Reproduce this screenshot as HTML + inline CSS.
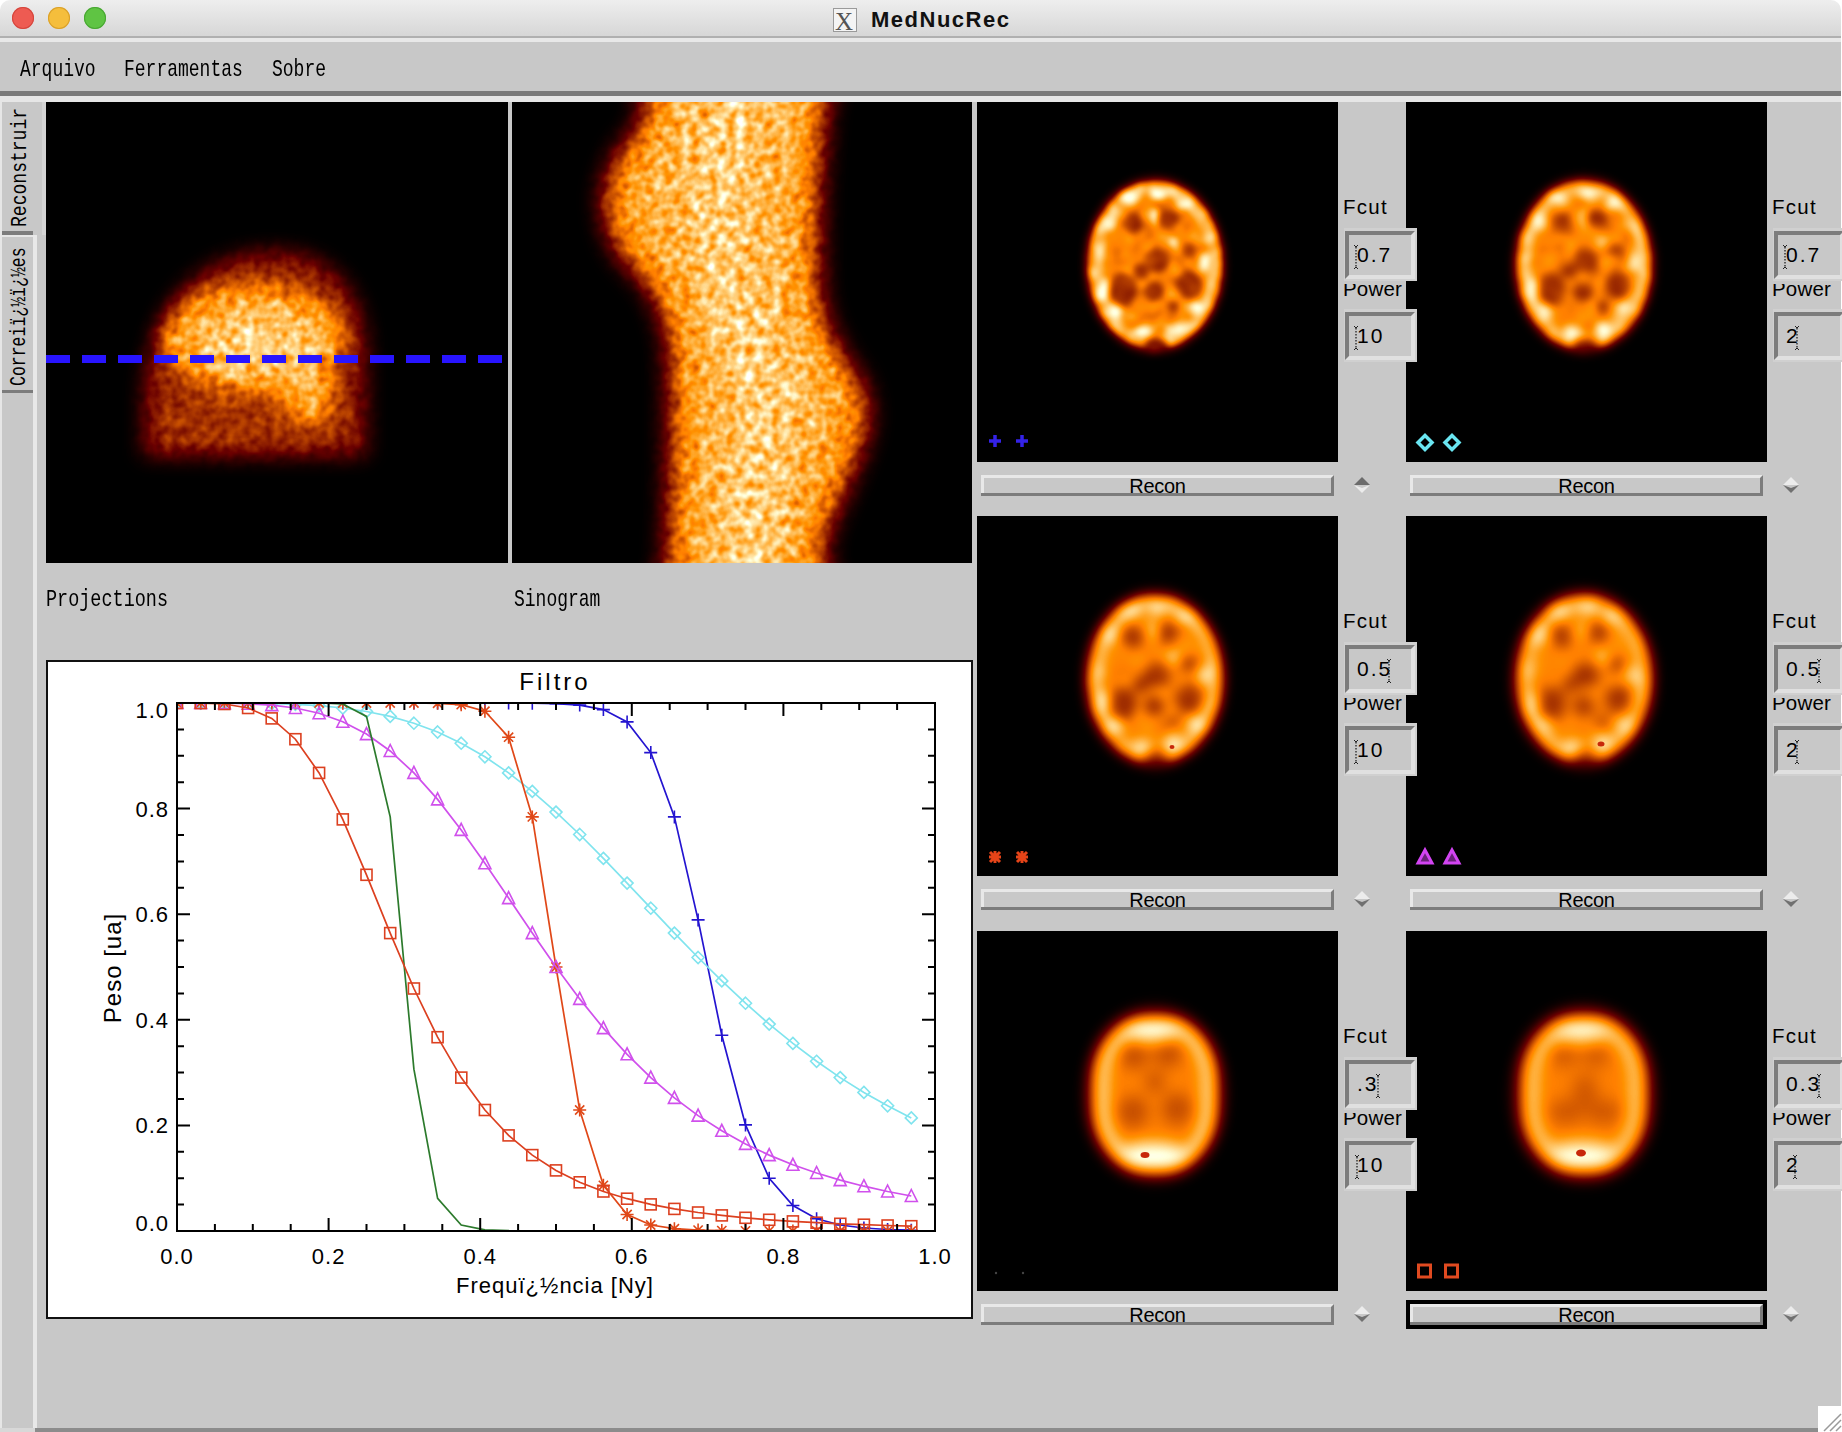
<!DOCTYPE html><html><head><meta charset="utf-8"><style>
*{margin:0;padding:0;box-sizing:border-box}
html,body{width:1842px;height:1432px;overflow:hidden;background:#fff}
.abs{position:absolute}
.mono{font-family:"Liberation Mono",monospace;font-size:24px;transform:scaleX(0.75);transform-origin:0 0;white-space:nowrap;color:#000;line-height:1}
.sans{font-family:"Liberation Sans",sans-serif;white-space:nowrap;color:#000;line-height:1}
.ct{font-family:"Liberation Sans",sans-serif;font-size:22px;fill:#000;letter-spacing:1px}
.cy{font-family:"Liberation Sans",sans-serif;font-size:24px;fill:#000;letter-spacing:1px}
.ctt{font-family:"Liberation Sans",sans-serif;font-size:24px;fill:#000;letter-spacing:3px}
</style></head><body><div class="abs" style="left:0px;top:20px;width:1841px;height:1412px;background:#c8c8c8;"></div><div class="abs" style="left:0px;top:0px;width:1841px;height:37px;background:linear-gradient(#eeeeee,#d6d6d6);border-top-left-radius:10px;border-top-right-radius:10px"></div><div class="abs" style="left:0px;top:36px;width:1841px;height:2px;background:#b0b0b0;"></div><div class="abs" style="left:0px;top:38px;width:1841px;height:4px;background:#e8e8e8;"></div><div class="abs" style="left:11.5px;top:7px;width:22px;height:22px;border-radius:50%;background:#ee5b52;box-shadow:inset 0 0 0 1px #d4463d"></div><div class="abs" style="left:47.5px;top:7px;width:22px;height:22px;border-radius:50%;background:#f5be3c;box-shadow:inset 0 0 0 1px #d9a02a"></div><div class="abs" style="left:83.5px;top:7px;width:22px;height:22px;border-radius:50%;background:#5fc443;box-shadow:inset 0 0 0 1px #48a733"></div><div class="abs" style="left:833px;top:8px;width:24px;height:24px;border:1px solid #9a9a9a;background:#f4f4f4"></div><div class="abs sans" style="left:835px;top:9px;font-family:'Liberation Serif',serif;font-size:25px;color:#555">X</div><div class="abs sans" style="left:871px;top:9px;font-size:22px;font-weight:bold;letter-spacing:1.5px;color:#111">MedNucRec</div><div class="abs" style="left:0px;top:91px;width:1841px;height:5px;background:#7a7a7a;"></div><div class="abs" style="left:0px;top:96px;width:1841px;height:6px;background:#e6e6e6;"></div><div class="abs mono" style="left:20px;top:58px">Arquivo</div><div class="abs mono" style="left:124px;top:58px">Ferramentas</div><div class="abs mono" style="left:272px;top:58px">Sobre</div><svg class="abs" style="left:0;top:0" width="1842" height="1432" viewBox="0 0 1842 1432"><defs><filter id="b2" x="0" y="0" width="1" height="1" color-interpolation-filters="sRGB"><feTurbulence type="fractalNoise" baseFrequency="0.09" numOctaves="2" seed="11" result="t"/><feColorMatrix in="t" type="matrix" values="1 0 0 0 0 1 0 0 0 0 1 0 0 0 0 0 0 0 0 1" result="n"/><feComposite in="SourceGraphic" in2="n" operator="arithmetic" k1="0.7" k2="0.65" k3="0" k4="0" result="m"/><feGaussianBlur in="m" stdDeviation="3.4"/><feComponentTransfer><feFuncR type="linear" slope="1.667" intercept="0"/><feFuncG type="linear" slope="1.4286" intercept="-0.357"/><feFuncB type="linear" slope="2.857" intercept="-1.857"/></feComponentTransfer></filter><filter id="b3" x="0" y="0" width="1" height="1" color-interpolation-filters="sRGB"><feTurbulence type="fractalNoise" baseFrequency="0.09" numOctaves="2" seed="12" result="t"/><feColorMatrix in="t" type="matrix" values="1 0 0 0 0 1 0 0 0 0 1 0 0 0 0 0 0 0 0 1" result="n"/><feComposite in="SourceGraphic" in2="n" operator="arithmetic" k1="0.6" k2="0.7" k3="0" k4="0" result="m"/><feGaussianBlur in="m" stdDeviation="4.0"/><feComponentTransfer><feFuncR type="linear" slope="1.667" intercept="0"/><feFuncG type="linear" slope="1.4286" intercept="-0.357"/><feFuncB type="linear" slope="2.857" intercept="-1.857"/></feComponentTransfer></filter><filter id="b5" x="0" y="0" width="1" height="1" color-interpolation-filters="sRGB"><feTurbulence type="fractalNoise" baseFrequency="0.09" numOctaves="2" seed="13" result="t"/><feColorMatrix in="t" type="matrix" values="1 0 0 0 0 1 0 0 0 0 1 0 0 0 0 0 0 0 0 1" result="n"/><feComposite in="SourceGraphic" in2="n" operator="arithmetic" k1="0.45" k2="0.775" k3="0" k4="0" result="m"/><feGaussianBlur in="m" stdDeviation="5.6"/><feComponentTransfer><feFuncR type="linear" slope="1.667" intercept="0"/><feFuncG type="linear" slope="1.4286" intercept="-0.357"/><feFuncB type="linear" slope="2.857" intercept="-1.857"/></feComponentTransfer></filter><filter id="b6" x="0" y="0" width="1" height="1" color-interpolation-filters="sRGB"><feTurbulence type="fractalNoise" baseFrequency="0.09" numOctaves="2" seed="14" result="t"/><feColorMatrix in="t" type="matrix" values="1 0 0 0 0 1 0 0 0 0 1 0 0 0 0 0 0 0 0 1" result="n"/><feComposite in="SourceGraphic" in2="n" operator="arithmetic" k1="0.4" k2="0.8" k3="0" k4="0" result="m"/><feGaussianBlur in="m" stdDeviation="6.4"/><feComponentTransfer><feFuncR type="linear" slope="1.667" intercept="0"/><feFuncG type="linear" slope="1.4286" intercept="-0.357"/><feFuncB type="linear" slope="2.857" intercept="-1.857"/></feComponentTransfer></filter><filter id="b9" x="0" y="0" width="1" height="1" color-interpolation-filters="sRGB"><feGaussianBlur stdDeviation="8.0"/><feComponentTransfer><feFuncR type="linear" slope="1.667" intercept="0"/><feFuncG type="linear" slope="1.4286" intercept="-0.357"/><feFuncB type="linear" slope="2.857" intercept="-1.857"/></feComponentTransfer></filter><filter id="b10" x="0" y="0" width="1" height="1" color-interpolation-filters="sRGB"><feGaussianBlur stdDeviation="8.6"/><feComponentTransfer><feFuncR type="linear" slope="1.667" intercept="0"/><feFuncG type="linear" slope="1.4286" intercept="-0.357"/><feFuncB type="linear" slope="2.857" intercept="-1.857"/></feComponentTransfer></filter><filter id="np" x="0" y="0" width="1" height="1" color-interpolation-filters="sRGB"><feGaussianBlur in="SourceGraphic" stdDeviation="10" result="b"/><feTurbulence type="fractalNoise" baseFrequency="0.11" numOctaves="2" seed="4" result="t"/><feColorMatrix in="t" type="matrix" values="1 0 0 0 0 1 0 0 0 0 1 0 0 0 0 0 0 0 0 1" result="n0"/><feGaussianBlur in="n0" stdDeviation="1.2" result="n"/><feComposite in="b" in2="n" operator="arithmetic" k1="0.9" k2="0.55" k3="0" k4="0" result="m"/><feComponentTransfer in="m"><feFuncR type="linear" slope="1.667" intercept="0"/><feFuncG type="linear" slope="1.4286" intercept="-0.357"/><feFuncB type="linear" slope="2.857" intercept="-1.857"/></feComponentTransfer></filter><filter id="ns" x="0" y="0" width="1" height="1" color-interpolation-filters="sRGB"><feGaussianBlur in="SourceGraphic" stdDeviation="12" result="b"/><feTurbulence type="fractalNoise" baseFrequency="0.11" numOctaves="2" seed="9" result="t"/><feColorMatrix in="t" type="matrix" values="1 0 0 0 0 1 0 0 0 0 1 0 0 0 0 0 0 0 0 1" result="n0"/><feGaussianBlur in="n0" stdDeviation="1.2" result="n"/><feComposite in="b" in2="n" operator="arithmetic" k1="0.9" k2="0.55" k3="0" k4="0" result="m"/><feComponentTransfer in="m"><feFuncR type="linear" slope="1.667" intercept="0"/><feFuncG type="linear" slope="1.4286" intercept="-0.357"/><feFuncB type="linear" slope="2.857" intercept="-1.857"/></feComponentTransfer></filter><clipPath id="cp"><rect x="46" y="102" width="462" height="461"/></clipPath><clipPath id="cs"><rect x="512" y="102" width="460" height="461"/></clipPath><clipPath id="c00"><rect x="977" y="102" width="361" height="360"/></clipPath><clipPath id="c01"><rect x="1406" y="102" width="361" height="360"/></clipPath><clipPath id="c10"><rect x="977" y="516" width="361" height="360"/></clipPath><clipPath id="c11"><rect x="1406" y="516" width="361" height="360"/></clipPath><clipPath id="c20"><rect x="977" y="931" width="361" height="360"/></clipPath><clipPath id="c21"><rect x="1406" y="931" width="361" height="360"/></clipPath><radialGradient id="rgb"><stop offset="0" stop-color="rgb(110,110,110)"/><stop offset="0.8" stop-color="rgb(110,110,110)"/><stop offset="1" stop-color="#000"/></radialGradient><radialGradient id="rgs"><stop offset="0" stop-color="rgb(120,120,120)"/><stop offset="0.75" stop-color="rgb(120,120,120)"/><stop offset="1" stop-color="#000"/></radialGradient></defs><g clip-path="url(#cp)"><g filter="url(#np)"><rect x="6" y="62" width="542" height="541" fill="#000"/><path d="M144 456 L144 400 C144 330 182 254 270 251 C338 249 366 300 366 350 L366 456 Z" fill="rgb(87,87,87)"/><ellipse cx="250" cy="420" rx="100" ry="34" fill="rgb(99,99,99)"/><ellipse cx="253" cy="338" rx="92" ry="54" fill="rgb(178,178,178)"/><ellipse cx="262" cy="345" rx="62" ry="32" fill="rgb(209,209,209)"/><ellipse cx="308" cy="392" rx="26" ry="30" fill="rgb(189,189,189)"/></g></g><g clip-path="url(#cs)"><g filter="url(#ns)"><rect x="472" y="62" width="540" height="541" fill="#000"/><path d="M655.0 80.0 C624.8 83.7 650.2 93.3 647.0 102.0 C643.8 110.7 640.3 124.0 636.0 132.0 C631.7 140.0 625.0 144.0 621.0 150.0 C617.0 156.0 614.8 160.0 612.0 168.0 C609.2 176.0 604.3 187.0 604.0 198.0 C603.7 209.0 607.2 224.3 610.0 234.0 C612.8 243.7 614.8 247.3 621.0 256.0 C627.2 264.7 640.3 276.2 647.0 286.0 C653.7 295.8 657.3 304.0 661.0 315.0 C664.7 326.0 667.5 327.5 669.0 352.0 C670.5 376.5 670.3 427.2 670.0 462.0 C669.7 496.8 667.5 538.0 667.0 561.0 C666.5 584.0 641.0 593.5 667.0 600.0 C693.0 606.5 797.0 606.5 823.0 600.0 C849.0 593.5 822.5 571.8 823.0 561.0 C823.5 550.2 823.0 545.5 826.0 535.0 C829.0 524.5 836.0 510.2 841.0 498.0 C846.0 485.8 851.7 474.2 856.0 462.0 C860.3 449.8 865.8 437.3 867.0 425.0 C868.2 412.7 867.3 400.2 863.0 388.0 C858.7 375.8 848.0 366.7 841.0 352.0 C834.0 337.3 824.7 325.3 821.0 300.0 C817.3 274.7 818.2 233.0 819.0 200.0 C819.8 167.0 824.5 122.0 826.0 102.0 C827.5 82.0 856.5 83.7 828.0 80.0 C799.5 76.3 685.2 76.3 655.0 80.0Z" fill="rgb(173,173,173)"/><path d="M672.0 80.0 C651.2 83.7 680.3 82.0 675.0 102.0 C669.7 122.0 638.3 167.0 640.0 200.0 C641.7 233.0 675.0 266.7 685.0 300.0 C695.0 333.3 697.5 356.2 700.0 400.0 C702.5 443.8 700.0 531.3 700.0 563.0 C700.0 594.7 684.2 585.5 700.0 590.0 C715.8 594.5 779.2 594.5 795.0 590.0 C810.8 585.5 793.3 578.0 795.0 563.0 C796.7 548.0 799.2 527.2 805.0 500.0 C810.8 472.8 830.8 433.3 830.0 400.0 C829.2 366.7 805.8 333.3 800.0 300.0 C794.2 266.7 795.0 233.0 795.0 200.0 C795.0 167.0 799.2 122.0 800.0 102.0 C800.8 82.0 821.3 83.7 800.0 80.0 C778.7 76.3 692.8 76.3 672.0 80.0Z" fill="rgb(191,191,191)"/><path d="M707.0 80.0 C697.7 83.7 709.5 82.0 707.0 102.0 C704.5 122.0 692.0 167.0 692.0 200.0 C692.0 233.0 699.5 266.7 707.0 300.0 C714.5 333.3 734.2 366.7 737.0 400.0 C739.8 433.3 727.3 468.3 724.0 500.0 C720.7 531.7 708.8 575.0 717.0 590.0 C725.2 605.0 762.5 605.0 773.0 590.0 C783.5 575.0 776.7 531.7 780.0 500.0 C783.3 468.3 795.8 433.3 793.0 400.0 C790.2 366.7 770.5 333.3 763.0 300.0 C755.5 266.7 748.0 233.0 748.0 200.0 C748.0 167.0 760.5 122.0 763.0 102.0 C765.5 82.0 772.3 83.7 763.0 80.0 C753.7 76.3 716.3 76.3 707.0 80.0Z" fill="rgb(209,209,209)"/></g></g><g clip-path="url(#c00)"><g filter="url(#b2)"><rect x="937" y="62" width="441" height="440" fill="#000"/><g transform="translate(1155,265)"><ellipse cx="0" cy="0" rx="75" ry="93" fill="url(#rgb)"/><ellipse cx="0" cy="0" rx="60" ry="77" fill="rgb(158,158,158)" stroke="rgb(204,204,204)" stroke-width="13"/><ellipse cx="-26" cy="-68" rx="10" ry="7" fill="rgb(247,247,247)"/><ellipse cx="3" cy="-71" rx="8" ry="6" fill="rgb(247,247,247)"/><ellipse cx="29" cy="-62" rx="8" ry="6" fill="rgb(247,247,247)"/><ellipse cx="-45" cy="-44" rx="7" ry="9" fill="rgb(247,247,247)"/><ellipse cx="-52" cy="25" rx="6" ry="12" fill="rgb(247,247,247)"/><ellipse cx="-40" cy="45" rx="7" ry="8" fill="rgb(247,247,247)"/><ellipse cx="-12" cy="67" rx="9" ry="6" fill="rgb(247,247,247)"/><ellipse cx="19" cy="64" rx="9" ry="7" fill="rgb(247,247,247)"/><ellipse cx="41" cy="45" rx="7" ry="8" fill="rgb(247,247,247)"/><ellipse cx="49" cy="-3" rx="5" ry="9" fill="rgb(247,247,247)"/><ellipse cx="-56" cy="-8" rx="4" ry="7" fill="rgb(247,247,247)"/><ellipse cx="18" cy="-23" rx="5" ry="5" fill="rgb(247,247,247)"/><ellipse cx="0" cy="-48" rx="4" ry="9" fill="rgb(247,247,247)"/><ellipse cx="-22" cy="-42" rx="10" ry="11" fill="rgb(97,97,97)"/><ellipse cx="13" cy="-46" rx="11" ry="10" fill="rgb(97,97,97)"/><ellipse cx="33" cy="-15" rx="7" ry="7" fill="rgb(97,97,97)"/><ellipse cx="2" cy="-4" rx="13" ry="12" fill="rgb(97,97,97)"/><ellipse cx="-32" cy="25" rx="14" ry="17" fill="rgb(97,97,97)"/><ellipse cx="34" cy="20" rx="13" ry="14" fill="rgb(97,97,97)"/><ellipse cx="-1" cy="27" rx="10" ry="10" fill="rgb(97,97,97)"/><ellipse cx="-14" cy="6" rx="8" ry="8" fill="rgb(97,97,97)"/><ellipse cx="18" cy="42" rx="6" ry="6" fill="rgb(97,97,97)"/><ellipse cx="1" cy="80" rx="12" ry="7" fill="rgb(76,76,76)"/></g></g></g><g clip-path="url(#c01)"><g filter="url(#b3)"><rect x="1366" y="62" width="441" height="440" fill="#000"/><g transform="translate(1584,265)"><ellipse cx="0" cy="0" rx="75" ry="93" fill="url(#rgb)"/><ellipse cx="0" cy="0" rx="60" ry="77" fill="rgb(158,158,158)" stroke="rgb(204,204,204)" stroke-width="13"/><ellipse cx="-26" cy="-68" rx="10" ry="7" fill="rgb(247,247,247)"/><ellipse cx="3" cy="-71" rx="8" ry="6" fill="rgb(247,247,247)"/><ellipse cx="29" cy="-62" rx="8" ry="6" fill="rgb(247,247,247)"/><ellipse cx="-45" cy="-44" rx="7" ry="9" fill="rgb(247,247,247)"/><ellipse cx="-52" cy="25" rx="6" ry="12" fill="rgb(247,247,247)"/><ellipse cx="-40" cy="45" rx="7" ry="8" fill="rgb(247,247,247)"/><ellipse cx="-12" cy="67" rx="9" ry="6" fill="rgb(247,247,247)"/><ellipse cx="19" cy="64" rx="9" ry="7" fill="rgb(247,247,247)"/><ellipse cx="41" cy="45" rx="7" ry="8" fill="rgb(247,247,247)"/><ellipse cx="49" cy="-3" rx="5" ry="9" fill="rgb(247,247,247)"/><ellipse cx="-56" cy="-8" rx="4" ry="7" fill="rgb(247,247,247)"/><ellipse cx="18" cy="-23" rx="5" ry="5" fill="rgb(247,247,247)"/><ellipse cx="0" cy="-48" rx="4" ry="9" fill="rgb(247,247,247)"/><ellipse cx="-22" cy="-42" rx="10" ry="11" fill="rgb(97,97,97)"/><ellipse cx="13" cy="-46" rx="11" ry="10" fill="rgb(97,97,97)"/><ellipse cx="33" cy="-15" rx="7" ry="7" fill="rgb(97,97,97)"/><ellipse cx="2" cy="-4" rx="13" ry="12" fill="rgb(97,97,97)"/><ellipse cx="-32" cy="25" rx="14" ry="17" fill="rgb(97,97,97)"/><ellipse cx="34" cy="20" rx="13" ry="14" fill="rgb(97,97,97)"/><ellipse cx="-1" cy="27" rx="10" ry="10" fill="rgb(97,97,97)"/><ellipse cx="-14" cy="6" rx="8" ry="8" fill="rgb(97,97,97)"/><ellipse cx="18" cy="42" rx="6" ry="6" fill="rgb(97,97,97)"/><ellipse cx="1" cy="80" rx="12" ry="7" fill="rgb(76,76,76)"/></g></g></g><g clip-path="url(#c10)"><g filter="url(#b5)"><rect x="937" y="476" width="441" height="440" fill="#000"/><g transform="translate(1155,679)"><ellipse cx="0" cy="0" rx="75" ry="93" fill="url(#rgb)"/><ellipse cx="0" cy="0" rx="60" ry="77" fill="rgb(158,158,158)" stroke="rgb(204,204,204)" stroke-width="13"/><ellipse cx="-26" cy="-68" rx="10" ry="7" fill="rgb(247,247,247)"/><ellipse cx="3" cy="-71" rx="8" ry="6" fill="rgb(247,247,247)"/><ellipse cx="29" cy="-62" rx="8" ry="6" fill="rgb(247,247,247)"/><ellipse cx="-45" cy="-44" rx="7" ry="9" fill="rgb(247,247,247)"/><ellipse cx="-52" cy="25" rx="6" ry="12" fill="rgb(247,247,247)"/><ellipse cx="-40" cy="45" rx="7" ry="8" fill="rgb(247,247,247)"/><ellipse cx="-12" cy="67" rx="9" ry="6" fill="rgb(247,247,247)"/><ellipse cx="19" cy="64" rx="9" ry="7" fill="rgb(247,247,247)"/><ellipse cx="41" cy="45" rx="7" ry="8" fill="rgb(247,247,247)"/><ellipse cx="49" cy="-3" rx="5" ry="9" fill="rgb(247,247,247)"/><ellipse cx="-56" cy="-8" rx="4" ry="7" fill="rgb(247,247,247)"/><ellipse cx="18" cy="-23" rx="5" ry="5" fill="rgb(247,247,247)"/><ellipse cx="0" cy="-48" rx="4" ry="9" fill="rgb(247,247,247)"/><ellipse cx="-22" cy="-42" rx="10" ry="11" fill="rgb(97,97,97)"/><ellipse cx="13" cy="-46" rx="11" ry="10" fill="rgb(97,97,97)"/><ellipse cx="33" cy="-15" rx="7" ry="7" fill="rgb(97,97,97)"/><ellipse cx="2" cy="-4" rx="13" ry="12" fill="rgb(97,97,97)"/><ellipse cx="-32" cy="25" rx="14" ry="17" fill="rgb(97,97,97)"/><ellipse cx="34" cy="20" rx="13" ry="14" fill="rgb(97,97,97)"/><ellipse cx="-1" cy="27" rx="10" ry="10" fill="rgb(97,97,97)"/><ellipse cx="-14" cy="6" rx="8" ry="8" fill="rgb(97,97,97)"/><ellipse cx="18" cy="42" rx="6" ry="6" fill="rgb(97,97,97)"/><ellipse cx="1" cy="80" rx="12" ry="7" fill="rgb(76,76,76)"/></g></g></g><g clip-path="url(#c11)"><g filter="url(#b6)"><rect x="1366" y="476" width="441" height="440" fill="#000"/><g transform="translate(1584,679)"><ellipse cx="0" cy="0" rx="75" ry="93" fill="url(#rgb)"/><ellipse cx="0" cy="0" rx="60" ry="77" fill="rgb(158,158,158)" stroke="rgb(204,204,204)" stroke-width="13"/><ellipse cx="-26" cy="-68" rx="10" ry="7" fill="rgb(247,247,247)"/><ellipse cx="3" cy="-71" rx="8" ry="6" fill="rgb(247,247,247)"/><ellipse cx="29" cy="-62" rx="8" ry="6" fill="rgb(247,247,247)"/><ellipse cx="-45" cy="-44" rx="7" ry="9" fill="rgb(247,247,247)"/><ellipse cx="-52" cy="25" rx="6" ry="12" fill="rgb(247,247,247)"/><ellipse cx="-40" cy="45" rx="7" ry="8" fill="rgb(247,247,247)"/><ellipse cx="-12" cy="67" rx="9" ry="6" fill="rgb(247,247,247)"/><ellipse cx="19" cy="64" rx="9" ry="7" fill="rgb(247,247,247)"/><ellipse cx="41" cy="45" rx="7" ry="8" fill="rgb(247,247,247)"/><ellipse cx="49" cy="-3" rx="5" ry="9" fill="rgb(247,247,247)"/><ellipse cx="-56" cy="-8" rx="4" ry="7" fill="rgb(247,247,247)"/><ellipse cx="18" cy="-23" rx="5" ry="5" fill="rgb(247,247,247)"/><ellipse cx="0" cy="-48" rx="4" ry="9" fill="rgb(247,247,247)"/><ellipse cx="-22" cy="-42" rx="10" ry="11" fill="rgb(97,97,97)"/><ellipse cx="13" cy="-46" rx="11" ry="10" fill="rgb(97,97,97)"/><ellipse cx="33" cy="-15" rx="7" ry="7" fill="rgb(97,97,97)"/><ellipse cx="2" cy="-4" rx="13" ry="12" fill="rgb(97,97,97)"/><ellipse cx="-32" cy="25" rx="14" ry="17" fill="rgb(97,97,97)"/><ellipse cx="34" cy="20" rx="13" ry="14" fill="rgb(97,97,97)"/><ellipse cx="-1" cy="27" rx="10" ry="10" fill="rgb(97,97,97)"/><ellipse cx="-14" cy="6" rx="8" ry="8" fill="rgb(97,97,97)"/><ellipse cx="18" cy="42" rx="6" ry="6" fill="rgb(97,97,97)"/><ellipse cx="1" cy="80" rx="12" ry="7" fill="rgb(76,76,76)"/></g></g></g><g clip-path="url(#c20)"><g filter="url(#b9)"><rect x="937" y="891" width="441" height="440" fill="#000"/><g transform="translate(1155,1094)"><ellipse cx="0" cy="0" rx="72" ry="90" fill="url(#rgs)"/><rect x="-55" y="-71" width="110" height="143" rx="48" ry="58" fill="rgb(153,153,153)" stroke="rgb(242,242,242)" stroke-width="13"/><ellipse cx="-21" cy="-38" rx="14" ry="13" fill="rgb(117,117,117)"/><ellipse cx="13" cy="-40" rx="14" ry="13" fill="rgb(117,117,117)"/><ellipse cx="-22" cy="18" rx="15" ry="16" fill="rgb(117,117,117)"/><ellipse cx="22" cy="15" rx="15" ry="16" fill="rgb(117,117,117)"/><ellipse cx="0" cy="-12" rx="9" ry="11" fill="rgb(117,117,117)"/><ellipse cx="-4" cy="-62" rx="28" ry="8" fill="rgb(255,255,255)"/><ellipse cx="-2" cy="60" rx="34" ry="11" fill="rgb(255,255,255)"/></g></g></g><g clip-path="url(#c21)"><g filter="url(#b10)"><rect x="1366" y="891" width="441" height="440" fill="#000"/><g transform="translate(1584,1094)"><ellipse cx="0" cy="0" rx="72" ry="90" fill="url(#rgs)"/><rect x="-55" y="-71" width="110" height="143" rx="48" ry="58" fill="rgb(153,153,153)" stroke="rgb(242,242,242)" stroke-width="13"/><ellipse cx="-20" cy="-38" rx="13" ry="11" fill="rgb(122,122,122)"/><ellipse cx="12" cy="-38" rx="13" ry="11" fill="rgb(122,122,122)"/><ellipse cx="1" cy="-4" rx="12" ry="16" fill="rgb(122,122,122)"/><ellipse cx="-18" cy="18" rx="18" ry="12" fill="rgb(122,122,122)"/><ellipse cx="20" cy="18" rx="18" ry="12" fill="rgb(122,122,122)"/><ellipse cx="-4" cy="-62" rx="28" ry="8" fill="rgb(255,255,255)"/><ellipse cx="-2" cy="60" rx="34" ry="11" fill="rgb(255,255,255)"/></g></g></g><path d="M46 359h24M82 359h24M118 359h24M154 359h24M190 359h24M226 359h24M262 359h24M298 359h24M334 359h24M370 359h24M406 359h24M442 359h24M478 359h24" stroke="#2814ff" stroke-width="8"/><path d="M989 441h12M995 435v12" stroke="#3422e8" stroke-width="3.5"/><path d="M1016 441h12M1022 435v12" stroke="#3422e8" stroke-width="3.5"/><path d="M1425 435.5L1432 442.5L1425 449.5L1418 442.5Z" stroke="#6ae6f2" stroke-width="3.5" fill="none"/><path d="M1452 435.5L1459 442.5L1452 449.5L1445 442.5Z" stroke="#6ae6f2" stroke-width="3.5" fill="none"/><path d="M989 857h12M995 851v12M990 852l10 10M990 862l10 -10" stroke="#e64418" stroke-width="3"/><path d="M1016 857h12M1022 851v12M1017 852l10 10M1017 862l10 -10" stroke="#e64418" stroke-width="3"/><path d="M1425 850L1432 863L1418 863Z" stroke="#d244f2" stroke-width="3" fill="#d244f2" fill-opacity="0.5"/><path d="M1452 850L1459 863L1445 863Z" stroke="#d244f2" stroke-width="3" fill="#d244f2" fill-opacity="0.5"/><circle cx="996" cy="1273" r="1.2" fill="#444"/><circle cx="1023" cy="1273" r="1.2" fill="#444"/><rect x="1418.5" y="1265" width="12" height="12" stroke="#e04a20" stroke-width="3" fill="none"/><rect x="1445.5" y="1265" width="12" height="12" stroke="#e04a20" stroke-width="3" fill="none"/><ellipse cx="1172" cy="747" rx="2.5" ry="2" fill="#c8280a"/><ellipse cx="1601" cy="744" rx="3.5" ry="2.5" fill="#c8280a"/><ellipse cx="1145" cy="1155" rx="4.5" ry="3" fill="#c8280a"/><ellipse cx="1581" cy="1153" rx="5" ry="3.5" fill="#c8280a"/></svg><div class="abs" style="left:0px;top:102px;width:2px;height:1326px;background:#e6e6e6;"></div><div class="abs" style="left:2px;top:102px;width:40px;height:129px;background:#c8c8c8;"></div><div class="abs" style="left:42px;top:102px;width:4px;height:133px;background:#d4d4d4;"></div><div class="abs" style="left:2px;top:231px;width:31px;height:4px;background:#7c7c7c;"></div><div class="abs" style="left:0px;top:235px;width:33px;height:2px;background:#e6e6e6;"></div><div class="abs" style="left:2px;top:237px;width:31px;height:153px;background:#c8c8c8;"></div><div class="abs" style="left:2px;top:390px;width:31px;height:3px;background:#7c7c7c;"></div><div class="abs" style="left:33px;top:235px;width:4px;height:1193px;background:#e8e8e8;"></div><div class="abs mono" style="left:10px;top:227px;transform:rotate(-90deg) scaleX(0.82);transform-origin:0 0;font-size:22px">Reconstruir</div><div class="abs mono" style="left:9px;top:386px;transform:rotate(-90deg) scaleX(0.75);transform-origin:0 0;font-size:22px">Correiï¿½ï¿½es</div><div class="abs" style="left:35px;top:1428px;width:1806px;height:4px;background:#8c8c8c;"></div><div class="abs" style="left:0px;top:1428px;width:35px;height:4px;background:#d8d8d8;"></div><div class="abs mono" style="left:46px;top:588px;transform:scaleX(0.77)">Projections</div><div class="abs mono" style="left:514px;top:588px">Sinogram</div><div class="abs sans" style="left:1343px;top:197px;font-size:20.5px;letter-spacing:1.3px">Fcut</div><div class="abs" style="left:1343px;top:284px;width:60px;height:20px;overflow:hidden"><div class="sans" style="position:absolute;left:0;top:-5px;font-size:20.5px;letter-spacing:0.2px">Power</div></div><div class="abs" style="left:1344px;top:228px;width:73px;height:53px;background:#d0d0d0;"></div><div class="abs" style="left:1345px;top:231px;width:70px;height:48px;background:#c8c8c8;border-style:solid;border-width:4px;border-color:#7c7c7c #e0e0e0 #e0e0e0 #7c7c7c"></div><div class="abs sans" style="left:1357px;top:244px;font-size:21px;letter-spacing:2px">0.7</div><div class="abs" style="left:1344px;top:309px;width:73px;height:53px;background:#d0d0d0;"></div><div class="abs" style="left:1345px;top:312px;width:70px;height:48px;background:#c8c8c8;border-style:solid;border-width:4px;border-color:#7c7c7c #e0e0e0 #e0e0e0 #7c7c7c"></div><div class="abs sans" style="left:1357px;top:325px;font-size:21px;letter-spacing:2px">10</div><svg class="abs" style="left:1353px;top:245px" width="6" height="24"><path d="M3 2v20" stroke="#222" stroke-width="1.3" stroke-dasharray="1.5 1.5"/><path d="M1 0l2 2l2 -2M1 24l2 -2l2 2" stroke="#222" stroke-width="1" fill="none"/></svg><svg class="abs" style="left:1353px;top:326px" width="6" height="24"><path d="M3 2v20" stroke="#222" stroke-width="1.3" stroke-dasharray="1.5 1.5"/><path d="M1 0l2 2l2 -2M1 24l2 -2l2 2" stroke="#222" stroke-width="1" fill="none"/></svg><div class="abs" style="left:981px;top:475px;width:353px;height:21px;background:#c8c8c8;border-top:3px solid #e8e8e8;border-left:3px solid #e8e8e8"></div><div class="abs sans" style="left:981px;width:353px;top:476px;text-align:center;font-size:20px;letter-spacing:-0.3px">Recon</div><div class="abs" style="left:981px;top:493px;width:353px;height:3px;background:#7c7c7c;"></div><div class="abs" style="left:1331px;top:475px;width:3px;height:21px;background:#7c7c7c;clip-path:polygon(100% 0,100% 100%,0 100%,0 3px)"></div><svg class="abs" style="left:1353px;top:476px" width="18" height="18"><path d="M1 9 L9 1 L17 9 Z" fill="#6c6c6c"/><path d="M1 9 L9 17 L17 9 L9 12 Z" fill="#ececec"/></svg><div class="abs sans" style="left:1772px;top:197px;font-size:20.5px;letter-spacing:1.3px">Fcut</div><div class="abs" style="left:1772px;top:284px;width:60px;height:20px;overflow:hidden"><div class="sans" style="position:absolute;left:0;top:-5px;font-size:20.5px;letter-spacing:0.2px">Power</div></div><div class="abs" style="left:1773px;top:228px;width:73px;height:53px;background:#d0d0d0;"></div><div class="abs" style="left:1774px;top:231px;width:70px;height:48px;background:#c8c8c8;border-style:solid;border-width:4px;border-color:#7c7c7c #e0e0e0 #e0e0e0 #7c7c7c"></div><div class="abs sans" style="left:1786px;top:244px;font-size:21px;letter-spacing:2px">0.7</div><div class="abs" style="left:1773px;top:309px;width:73px;height:53px;background:#d0d0d0;"></div><div class="abs" style="left:1774px;top:312px;width:70px;height:48px;background:#c8c8c8;border-style:solid;border-width:4px;border-color:#7c7c7c #e0e0e0 #e0e0e0 #7c7c7c"></div><div class="abs sans" style="left:1786px;top:325px;font-size:21px;letter-spacing:2px">2</div><svg class="abs" style="left:1782px;top:245px" width="6" height="24"><path d="M3 2v20" stroke="#222" stroke-width="1.3" stroke-dasharray="1.5 1.5"/><path d="M1 0l2 2l2 -2M1 24l2 -2l2 2" stroke="#222" stroke-width="1" fill="none"/></svg><svg class="abs" style="left:1794px;top:326px" width="6" height="24"><path d="M3 2v20" stroke="#222" stroke-width="1.3" stroke-dasharray="1.5 1.5"/><path d="M1 0l2 2l2 -2M1 24l2 -2l2 2" stroke="#222" stroke-width="1" fill="none"/></svg><div class="abs" style="left:1410px;top:475px;width:353px;height:21px;background:#c8c8c8;border-top:3px solid #e8e8e8;border-left:3px solid #e8e8e8"></div><div class="abs sans" style="left:1410px;width:353px;top:476px;text-align:center;font-size:20px;letter-spacing:-0.3px">Recon</div><div class="abs" style="left:1410px;top:493px;width:353px;height:3px;background:#7c7c7c;"></div><div class="abs" style="left:1760px;top:475px;width:3px;height:21px;background:#7c7c7c;clip-path:polygon(100% 0,100% 100%,0 100%,0 3px)"></div><svg class="abs" style="left:1782px;top:476px" width="18" height="18"><path d="M1 9 L9 1 L17 9 Z" fill="#ececec"/><path d="M1 9 L9 17 L17 9 L9 12 Z" fill="#707070"/></svg><div class="abs sans" style="left:1343px;top:611px;font-size:20.5px;letter-spacing:1.3px">Fcut</div><div class="abs" style="left:1343px;top:698px;width:60px;height:20px;overflow:hidden"><div class="sans" style="position:absolute;left:0;top:-5px;font-size:20.5px;letter-spacing:0.2px">Power</div></div><div class="abs" style="left:1344px;top:642px;width:73px;height:53px;background:#d0d0d0;"></div><div class="abs" style="left:1345px;top:645px;width:70px;height:48px;background:#c8c8c8;border-style:solid;border-width:4px;border-color:#7c7c7c #e0e0e0 #e0e0e0 #7c7c7c"></div><div class="abs sans" style="left:1357px;top:658px;font-size:21px;letter-spacing:2px">0.5</div><div class="abs" style="left:1344px;top:723px;width:73px;height:53px;background:#d0d0d0;"></div><div class="abs" style="left:1345px;top:726px;width:70px;height:48px;background:#c8c8c8;border-style:solid;border-width:4px;border-color:#7c7c7c #e0e0e0 #e0e0e0 #7c7c7c"></div><div class="abs sans" style="left:1357px;top:739px;font-size:21px;letter-spacing:2px">10</div><svg class="abs" style="left:1386px;top:659px" width="6" height="24"><path d="M3 2v20" stroke="#222" stroke-width="1.3" stroke-dasharray="1.5 1.5"/><path d="M1 0l2 2l2 -2M1 24l2 -2l2 2" stroke="#222" stroke-width="1" fill="none"/></svg><svg class="abs" style="left:1353px;top:740px" width="6" height="24"><path d="M3 2v20" stroke="#222" stroke-width="1.3" stroke-dasharray="1.5 1.5"/><path d="M1 0l2 2l2 -2M1 24l2 -2l2 2" stroke="#222" stroke-width="1" fill="none"/></svg><div class="abs" style="left:981px;top:889px;width:353px;height:21px;background:#c8c8c8;border-top:3px solid #e8e8e8;border-left:3px solid #e8e8e8"></div><div class="abs sans" style="left:981px;width:353px;top:890px;text-align:center;font-size:20px;letter-spacing:-0.3px">Recon</div><div class="abs" style="left:981px;top:907px;width:353px;height:3px;background:#7c7c7c;"></div><div class="abs" style="left:1331px;top:889px;width:3px;height:21px;background:#7c7c7c;clip-path:polygon(100% 0,100% 100%,0 100%,0 3px)"></div><svg class="abs" style="left:1353px;top:890px" width="18" height="18"><path d="M1 9 L9 1 L17 9 Z" fill="#ececec"/><path d="M1 9 L9 17 L17 9 L9 12 Z" fill="#707070"/></svg><div class="abs sans" style="left:1772px;top:611px;font-size:20.5px;letter-spacing:1.3px">Fcut</div><div class="abs" style="left:1772px;top:698px;width:60px;height:20px;overflow:hidden"><div class="sans" style="position:absolute;left:0;top:-5px;font-size:20.5px;letter-spacing:0.2px">Power</div></div><div class="abs" style="left:1773px;top:642px;width:73px;height:53px;background:#d0d0d0;"></div><div class="abs" style="left:1774px;top:645px;width:70px;height:48px;background:#c8c8c8;border-style:solid;border-width:4px;border-color:#7c7c7c #e0e0e0 #e0e0e0 #7c7c7c"></div><div class="abs sans" style="left:1786px;top:658px;font-size:21px;letter-spacing:2px">0.5</div><div class="abs" style="left:1773px;top:723px;width:73px;height:53px;background:#d0d0d0;"></div><div class="abs" style="left:1774px;top:726px;width:70px;height:48px;background:#c8c8c8;border-style:solid;border-width:4px;border-color:#7c7c7c #e0e0e0 #e0e0e0 #7c7c7c"></div><div class="abs sans" style="left:1786px;top:739px;font-size:21px;letter-spacing:2px">2</div><svg class="abs" style="left:1816px;top:659px" width="6" height="24"><path d="M3 2v20" stroke="#222" stroke-width="1.3" stroke-dasharray="1.5 1.5"/><path d="M1 0l2 2l2 -2M1 24l2 -2l2 2" stroke="#222" stroke-width="1" fill="none"/></svg><svg class="abs" style="left:1794px;top:740px" width="6" height="24"><path d="M3 2v20" stroke="#222" stroke-width="1.3" stroke-dasharray="1.5 1.5"/><path d="M1 0l2 2l2 -2M1 24l2 -2l2 2" stroke="#222" stroke-width="1" fill="none"/></svg><div class="abs" style="left:1410px;top:889px;width:353px;height:21px;background:#c8c8c8;border-top:3px solid #e8e8e8;border-left:3px solid #e8e8e8"></div><div class="abs sans" style="left:1410px;width:353px;top:890px;text-align:center;font-size:20px;letter-spacing:-0.3px">Recon</div><div class="abs" style="left:1410px;top:907px;width:353px;height:3px;background:#7c7c7c;"></div><div class="abs" style="left:1760px;top:889px;width:3px;height:21px;background:#7c7c7c;clip-path:polygon(100% 0,100% 100%,0 100%,0 3px)"></div><svg class="abs" style="left:1782px;top:890px" width="18" height="18"><path d="M1 9 L9 1 L17 9 Z" fill="#ececec"/><path d="M1 9 L9 17 L17 9 L9 12 Z" fill="#707070"/></svg><div class="abs sans" style="left:1343px;top:1026px;font-size:20.5px;letter-spacing:1.3px">Fcut</div><div class="abs" style="left:1343px;top:1113px;width:60px;height:20px;overflow:hidden"><div class="sans" style="position:absolute;left:0;top:-5px;font-size:20.5px;letter-spacing:0.2px">Power</div></div><div class="abs" style="left:1344px;top:1057px;width:73px;height:53px;background:#d0d0d0;"></div><div class="abs" style="left:1345px;top:1060px;width:70px;height:48px;background:#c8c8c8;border-style:solid;border-width:4px;border-color:#7c7c7c #e0e0e0 #e0e0e0 #7c7c7c"></div><div class="abs sans" style="left:1357px;top:1073px;font-size:21px;letter-spacing:2px">.3</div><div class="abs" style="left:1344px;top:1138px;width:73px;height:53px;background:#d0d0d0;"></div><div class="abs" style="left:1345px;top:1141px;width:70px;height:48px;background:#c8c8c8;border-style:solid;border-width:4px;border-color:#7c7c7c #e0e0e0 #e0e0e0 #7c7c7c"></div><div class="abs sans" style="left:1357px;top:1154px;font-size:21px;letter-spacing:2px">10</div><svg class="abs" style="left:1375px;top:1074px" width="6" height="24"><path d="M3 2v20" stroke="#222" stroke-width="1.3" stroke-dasharray="1.5 1.5"/><path d="M1 0l2 2l2 -2M1 24l2 -2l2 2" stroke="#222" stroke-width="1" fill="none"/></svg><svg class="abs" style="left:1354px;top:1155px" width="6" height="24"><path d="M3 2v20" stroke="#222" stroke-width="1.3" stroke-dasharray="1.5 1.5"/><path d="M1 0l2 2l2 -2M1 24l2 -2l2 2" stroke="#222" stroke-width="1" fill="none"/></svg><div class="abs" style="left:981px;top:1304px;width:353px;height:21px;background:#c8c8c8;border-top:3px solid #e8e8e8;border-left:3px solid #e8e8e8"></div><div class="abs sans" style="left:981px;width:353px;top:1305px;text-align:center;font-size:20px;letter-spacing:-0.3px">Recon</div><div class="abs" style="left:981px;top:1322px;width:353px;height:3px;background:#7c7c7c;"></div><div class="abs" style="left:1331px;top:1304px;width:3px;height:21px;background:#7c7c7c;clip-path:polygon(100% 0,100% 100%,0 100%,0 3px)"></div><svg class="abs" style="left:1353px;top:1305px" width="18" height="18"><path d="M1 9 L9 1 L17 9 Z" fill="#ececec"/><path d="M1 9 L9 17 L17 9 L9 12 Z" fill="#707070"/></svg><div class="abs sans" style="left:1772px;top:1026px;font-size:20.5px;letter-spacing:1.3px">Fcut</div><div class="abs" style="left:1772px;top:1113px;width:60px;height:20px;overflow:hidden"><div class="sans" style="position:absolute;left:0;top:-5px;font-size:20.5px;letter-spacing:0.2px">Power</div></div><div class="abs" style="left:1773px;top:1057px;width:73px;height:53px;background:#d0d0d0;"></div><div class="abs" style="left:1774px;top:1060px;width:70px;height:48px;background:#c8c8c8;border-style:solid;border-width:4px;border-color:#7c7c7c #e0e0e0 #e0e0e0 #7c7c7c"></div><div class="abs sans" style="left:1786px;top:1073px;font-size:21px;letter-spacing:2px">0.3</div><div class="abs" style="left:1773px;top:1138px;width:73px;height:53px;background:#d0d0d0;"></div><div class="abs" style="left:1774px;top:1141px;width:70px;height:48px;background:#c8c8c8;border-style:solid;border-width:4px;border-color:#7c7c7c #e0e0e0 #e0e0e0 #7c7c7c"></div><div class="abs sans" style="left:1786px;top:1154px;font-size:21px;letter-spacing:2px">2</div><svg class="abs" style="left:1816px;top:1074px" width="6" height="24"><path d="M3 2v20" stroke="#222" stroke-width="1.3" stroke-dasharray="1.5 1.5"/><path d="M1 0l2 2l2 -2M1 24l2 -2l2 2" stroke="#222" stroke-width="1" fill="none"/></svg><svg class="abs" style="left:1792px;top:1155px" width="6" height="24"><path d="M3 2v20" stroke="#222" stroke-width="1.3" stroke-dasharray="1.5 1.5"/><path d="M1 0l2 2l2 -2M1 24l2 -2l2 2" stroke="#222" stroke-width="1" fill="none"/></svg><div class="abs" style="left:1406px;top:1300px;width:361px;height:29px;background:#000;"></div><div class="abs" style="left:1410px;top:1304px;width:353px;height:21px;background:#c8c8c8;border-top:3px solid #e8e8e8;border-left:3px solid #e8e8e8"></div><div class="abs sans" style="left:1410px;width:353px;top:1305px;text-align:center;font-size:20px;letter-spacing:-0.3px">Recon</div><div class="abs" style="left:1410px;top:1322px;width:353px;height:3px;background:#7c7c7c;"></div><div class="abs" style="left:1760px;top:1304px;width:3px;height:21px;background:#7c7c7c;clip-path:polygon(100% 0,100% 100%,0 100%,0 3px)"></div><svg class="abs" style="left:1782px;top:1305px" width="18" height="18"><path d="M1 9 L9 1 L17 9 Z" fill="#ececec"/><path d="M1 9 L9 17 L17 9 L9 12 Z" fill="#707070"/></svg><svg class="abs" style="left:0;top:0" width="1842" height="1432" viewBox="0 0 1842 1432"><defs><clipPath id="plotclip"><rect x="177.0" y="703.0" width="758.0" height="528.0"/></clipPath></defs><rect x="47" y="661" width="925" height="657" fill="#fff" stroke="#111" stroke-width="2"/><g clip-path="url(#plotclip)"><path d="M177.0 703.0 L200.7 703.0 L224.4 703.0 L248.1 703.0 L271.8 703.0 L295.4 703.0 L319.1 703.0 L342.8 703.0 L366.5 703.0 L390.2 703.0 L413.9 703.0 L437.6 703.0 L461.2 703.0 L484.9 703.0 L508.6 703.0 L532.3 703.2 L556.0 703.6 L579.7 705.1 L603.4 709.6 L627.1 721.9 L650.8 752.6 L674.4 816.9 L698.1 919.9 L721.8 1035.2 L745.5 1124.9 L769.2 1178.2 L792.9 1205.5 L816.6 1218.7 L840.2 1225.0 L863.9 1228.0 L887.6 1229.5 L911.3 1230.2" fill="none" stroke="#2414d0" stroke-width="1.7"/><path d="M170.5 703.0h13M177.0 696.5v13" stroke="#2414d0" stroke-width="1.6" fill="none"/><path d="M194.2 703.0h13M200.7 696.5v13" stroke="#2414d0" stroke-width="1.6" fill="none"/><path d="M217.9 703.0h13M224.4 696.5v13" stroke="#2414d0" stroke-width="1.6" fill="none"/><path d="M241.6 703.0h13M248.1 696.5v13" stroke="#2414d0" stroke-width="1.6" fill="none"/><path d="M265.2 703.0h13M271.8 696.5v13" stroke="#2414d0" stroke-width="1.6" fill="none"/><path d="M288.9 703.0h13M295.4 696.5v13" stroke="#2414d0" stroke-width="1.6" fill="none"/><path d="M312.6 703.0h13M319.1 696.5v13" stroke="#2414d0" stroke-width="1.6" fill="none"/><path d="M336.3 703.0h13M342.8 696.5v13" stroke="#2414d0" stroke-width="1.6" fill="none"/><path d="M360.0 703.0h13M366.5 696.5v13" stroke="#2414d0" stroke-width="1.6" fill="none"/><path d="M383.7 703.0h13M390.2 696.5v13" stroke="#2414d0" stroke-width="1.6" fill="none"/><path d="M407.4 703.0h13M413.9 696.5v13" stroke="#2414d0" stroke-width="1.6" fill="none"/><path d="M431.1 703.0h13M437.6 696.5v13" stroke="#2414d0" stroke-width="1.6" fill="none"/><path d="M454.8 703.0h13M461.2 696.5v13" stroke="#2414d0" stroke-width="1.6" fill="none"/><path d="M478.4 703.0h13M484.9 696.5v13" stroke="#2414d0" stroke-width="1.6" fill="none"/><path d="M502.1 703.0h13M508.6 696.5v13" stroke="#2414d0" stroke-width="1.6" fill="none"/><path d="M525.8 703.2h13M532.3 696.7v13" stroke="#2414d0" stroke-width="1.6" fill="none"/><path d="M549.5 703.6h13M556.0 697.1v13" stroke="#2414d0" stroke-width="1.6" fill="none"/><path d="M573.2 705.1h13M579.7 698.6v13" stroke="#2414d0" stroke-width="1.6" fill="none"/><path d="M596.9 709.6h13M603.4 703.1v13" stroke="#2414d0" stroke-width="1.6" fill="none"/><path d="M620.6 721.9h13M627.1 715.4v13" stroke="#2414d0" stroke-width="1.6" fill="none"/><path d="M644.2 752.6h13M650.8 746.1v13" stroke="#2414d0" stroke-width="1.6" fill="none"/><path d="M667.9 816.9h13M674.4 810.4v13" stroke="#2414d0" stroke-width="1.6" fill="none"/><path d="M691.6 919.9h13M698.1 913.4v13" stroke="#2414d0" stroke-width="1.6" fill="none"/><path d="M715.3 1035.2h13M721.8 1028.7v13" stroke="#2414d0" stroke-width="1.6" fill="none"/><path d="M739.0 1124.9h13M745.5 1118.4v13" stroke="#2414d0" stroke-width="1.6" fill="none"/><path d="M762.7 1178.2h13M769.2 1171.7v13" stroke="#2414d0" stroke-width="1.6" fill="none"/><path d="M786.4 1205.5h13M792.9 1199.0v13" stroke="#2414d0" stroke-width="1.6" fill="none"/><path d="M810.1 1218.7h13M816.6 1212.2v13" stroke="#2414d0" stroke-width="1.6" fill="none"/><path d="M833.8 1225.0h13M840.2 1218.5v13" stroke="#2414d0" stroke-width="1.6" fill="none"/><path d="M857.4 1228.0h13M863.9 1221.5v13" stroke="#2414d0" stroke-width="1.6" fill="none"/><path d="M881.1 1229.5h13M887.6 1223.0v13" stroke="#2414d0" stroke-width="1.6" fill="none"/><path d="M904.8 1230.2h13M911.3 1223.7v13" stroke="#2414d0" stroke-width="1.6" fill="none"/><path d="M177.0 703.0 L200.7 703.0 L224.4 703.0 L248.1 703.2 L271.8 703.5 L295.4 704.3 L319.1 705.7 L342.8 708.0 L366.5 711.5 L390.2 716.4 L413.9 723.2 L437.6 732.0 L461.2 743.2 L484.9 756.8 L508.6 772.9 L532.3 791.4 L556.0 812.1 L579.7 834.5 L603.4 858.4 L627.1 883.1 L650.8 908.2 L674.4 933.1 L698.1 957.5 L721.8 980.9 L745.5 1003.2 L769.2 1024.1 L792.9 1043.4 L816.6 1061.3 L840.2 1077.6 L863.9 1092.4 L887.6 1105.8 L911.3 1117.9" fill="none" stroke="#80e4ee" stroke-width="1.7"/><path d="M177.0 697.0L183.0 703.0L177.0 709.0L171.0 703.0Z" stroke="#80e4ee" stroke-width="1.6" fill="none"/><path d="M200.7 697.0L206.7 703.0L200.7 709.0L194.7 703.0Z" stroke="#80e4ee" stroke-width="1.6" fill="none"/><path d="M224.4 697.0L230.4 703.0L224.4 709.0L218.4 703.0Z" stroke="#80e4ee" stroke-width="1.6" fill="none"/><path d="M248.1 697.2L254.1 703.2L248.1 709.2L242.1 703.2Z" stroke="#80e4ee" stroke-width="1.6" fill="none"/><path d="M271.8 697.5L277.8 703.5L271.8 709.5L265.8 703.5Z" stroke="#80e4ee" stroke-width="1.6" fill="none"/><path d="M295.4 698.3L301.4 704.3L295.4 710.3L289.4 704.3Z" stroke="#80e4ee" stroke-width="1.6" fill="none"/><path d="M319.1 699.7L325.1 705.7L319.1 711.7L313.1 705.7Z" stroke="#80e4ee" stroke-width="1.6" fill="none"/><path d="M342.8 702.0L348.8 708.0L342.8 714.0L336.8 708.0Z" stroke="#80e4ee" stroke-width="1.6" fill="none"/><path d="M366.5 705.5L372.5 711.5L366.5 717.5L360.5 711.5Z" stroke="#80e4ee" stroke-width="1.6" fill="none"/><path d="M390.2 710.4L396.2 716.4L390.2 722.4L384.2 716.4Z" stroke="#80e4ee" stroke-width="1.6" fill="none"/><path d="M413.9 717.2L419.9 723.2L413.9 729.2L407.9 723.2Z" stroke="#80e4ee" stroke-width="1.6" fill="none"/><path d="M437.6 726.0L443.6 732.0L437.6 738.0L431.6 732.0Z" stroke="#80e4ee" stroke-width="1.6" fill="none"/><path d="M461.2 737.2L467.2 743.2L461.2 749.2L455.2 743.2Z" stroke="#80e4ee" stroke-width="1.6" fill="none"/><path d="M484.9 750.8L490.9 756.8L484.9 762.8L478.9 756.8Z" stroke="#80e4ee" stroke-width="1.6" fill="none"/><path d="M508.6 766.9L514.6 772.9L508.6 778.9L502.6 772.9Z" stroke="#80e4ee" stroke-width="1.6" fill="none"/><path d="M532.3 785.4L538.3 791.4L532.3 797.4L526.3 791.4Z" stroke="#80e4ee" stroke-width="1.6" fill="none"/><path d="M556.0 806.1L562.0 812.1L556.0 818.1L550.0 812.1Z" stroke="#80e4ee" stroke-width="1.6" fill="none"/><path d="M579.7 828.5L585.7 834.5L579.7 840.5L573.7 834.5Z" stroke="#80e4ee" stroke-width="1.6" fill="none"/><path d="M603.4 852.4L609.4 858.4L603.4 864.4L597.4 858.4Z" stroke="#80e4ee" stroke-width="1.6" fill="none"/><path d="M627.1 877.1L633.1 883.1L627.1 889.1L621.1 883.1Z" stroke="#80e4ee" stroke-width="1.6" fill="none"/><path d="M650.8 902.2L656.8 908.2L650.8 914.2L644.8 908.2Z" stroke="#80e4ee" stroke-width="1.6" fill="none"/><path d="M674.4 927.1L680.4 933.1L674.4 939.1L668.4 933.1Z" stroke="#80e4ee" stroke-width="1.6" fill="none"/><path d="M698.1 951.5L704.1 957.5L698.1 963.5L692.1 957.5Z" stroke="#80e4ee" stroke-width="1.6" fill="none"/><path d="M721.8 974.9L727.8 980.9L721.8 986.9L715.8 980.9Z" stroke="#80e4ee" stroke-width="1.6" fill="none"/><path d="M745.5 997.2L751.5 1003.2L745.5 1009.2L739.5 1003.2Z" stroke="#80e4ee" stroke-width="1.6" fill="none"/><path d="M769.2 1018.1L775.2 1024.1L769.2 1030.1L763.2 1024.1Z" stroke="#80e4ee" stroke-width="1.6" fill="none"/><path d="M792.9 1037.4L798.9 1043.4L792.9 1049.4L786.9 1043.4Z" stroke="#80e4ee" stroke-width="1.6" fill="none"/><path d="M816.6 1055.3L822.6 1061.3L816.6 1067.3L810.6 1061.3Z" stroke="#80e4ee" stroke-width="1.6" fill="none"/><path d="M840.2 1071.6L846.2 1077.6L840.2 1083.6L834.2 1077.6Z" stroke="#80e4ee" stroke-width="1.6" fill="none"/><path d="M863.9 1086.4L869.9 1092.4L863.9 1098.4L857.9 1092.4Z" stroke="#80e4ee" stroke-width="1.6" fill="none"/><path d="M887.6 1099.8L893.6 1105.8L887.6 1111.8L881.6 1105.8Z" stroke="#80e4ee" stroke-width="1.6" fill="none"/><path d="M911.3 1111.9L917.3 1117.9L911.3 1123.9L905.3 1117.9Z" stroke="#80e4ee" stroke-width="1.6" fill="none"/><path d="M177.0 703.0 L200.7 703.0 L224.4 703.0 L248.1 703.0 L271.8 703.0 L295.4 703.0 L319.1 703.0 L342.8 703.0 L366.5 703.0 L390.2 703.0 L413.9 703.0 L437.6 703.3 L461.2 704.7 L484.9 711.2 L508.6 737.2 L532.3 816.9 L556.0 967.0 L579.7 1110.0 L603.4 1185.3 L627.1 1214.5 L650.8 1225.0 L674.4 1228.7 L698.1 1230.1 L721.8 1230.6 L745.5 1230.8 L769.2 1230.9 L792.9 1231.0 L816.6 1231.0 L840.2 1231.0 L863.9 1231.0 L887.6 1231.0 L911.3 1231.0" fill="none" stroke="#e04818" stroke-width="1.7"/><path d="M170.5 703.0h13M177.0 696.5v13M172.4 698.4l9.2 9.2M172.4 707.6l9.2 -9.2" stroke="#e04818" stroke-width="1.6" fill="none"/><path d="M194.2 703.0h13M200.7 696.5v13M196.1 698.4l9.2 9.2M196.1 707.6l9.2 -9.2" stroke="#e04818" stroke-width="1.6" fill="none"/><path d="M217.9 703.0h13M224.4 696.5v13M219.8 698.4l9.2 9.2M219.8 707.6l9.2 -9.2" stroke="#e04818" stroke-width="1.6" fill="none"/><path d="M241.6 703.0h13M248.1 696.5v13M243.5 698.4l9.2 9.2M243.5 707.6l9.2 -9.2" stroke="#e04818" stroke-width="1.6" fill="none"/><path d="M265.2 703.0h13M271.8 696.5v13M267.1 698.4l9.2 9.2M267.1 707.6l9.2 -9.2" stroke="#e04818" stroke-width="1.6" fill="none"/><path d="M288.9 703.0h13M295.4 696.5v13M290.8 698.4l9.2 9.2M290.8 707.6l9.2 -9.2" stroke="#e04818" stroke-width="1.6" fill="none"/><path d="M312.6 703.0h13M319.1 696.5v13M314.5 698.4l9.2 9.2M314.5 707.6l9.2 -9.2" stroke="#e04818" stroke-width="1.6" fill="none"/><path d="M336.3 703.0h13M342.8 696.5v13M338.2 698.4l9.2 9.2M338.2 707.6l9.2 -9.2" stroke="#e04818" stroke-width="1.6" fill="none"/><path d="M360.0 703.0h13M366.5 696.5v13M361.9 698.4l9.2 9.2M361.9 707.6l9.2 -9.2" stroke="#e04818" stroke-width="1.6" fill="none"/><path d="M383.7 703.0h13M390.2 696.5v13M385.6 698.4l9.2 9.2M385.6 707.6l9.2 -9.2" stroke="#e04818" stroke-width="1.6" fill="none"/><path d="M407.4 703.0h13M413.9 696.5v13M409.3 698.4l9.2 9.2M409.3 707.6l9.2 -9.2" stroke="#e04818" stroke-width="1.6" fill="none"/><path d="M431.1 703.3h13M437.6 696.8v13M433.0 698.7l9.2 9.2M433.0 707.9l9.2 -9.2" stroke="#e04818" stroke-width="1.6" fill="none"/><path d="M454.8 704.7h13M461.2 698.2v13M456.6 700.1l9.2 9.2M456.6 709.3l9.2 -9.2" stroke="#e04818" stroke-width="1.6" fill="none"/><path d="M478.4 711.2h13M484.9 704.7v13M480.3 706.6l9.2 9.2M480.3 715.8l9.2 -9.2" stroke="#e04818" stroke-width="1.6" fill="none"/><path d="M502.1 737.2h13M508.6 730.7v13M504.0 732.6l9.2 9.2M504.0 741.8l9.2 -9.2" stroke="#e04818" stroke-width="1.6" fill="none"/><path d="M525.8 816.9h13M532.3 810.4v13M527.7 812.3l9.2 9.2M527.7 821.5l9.2 -9.2" stroke="#e04818" stroke-width="1.6" fill="none"/><path d="M549.5 967.0h13M556.0 960.5v13M551.4 962.4l9.2 9.2M551.4 971.6l9.2 -9.2" stroke="#e04818" stroke-width="1.6" fill="none"/><path d="M573.2 1110.0h13M579.7 1103.5v13M575.1 1105.4l9.2 9.2M575.1 1114.6l9.2 -9.2" stroke="#e04818" stroke-width="1.6" fill="none"/><path d="M596.9 1185.3h13M603.4 1178.8v13M598.8 1180.7l9.2 9.2M598.8 1189.9l9.2 -9.2" stroke="#e04818" stroke-width="1.6" fill="none"/><path d="M620.6 1214.5h13M627.1 1208.0v13M622.5 1209.9l9.2 9.2M622.5 1219.1l9.2 -9.2" stroke="#e04818" stroke-width="1.6" fill="none"/><path d="M644.2 1225.0h13M650.8 1218.5v13M646.1 1220.4l9.2 9.2M646.1 1229.6l9.2 -9.2" stroke="#e04818" stroke-width="1.6" fill="none"/><path d="M667.9 1228.7h13M674.4 1222.2v13M669.8 1224.1l9.2 9.2M669.8 1233.3l9.2 -9.2" stroke="#e04818" stroke-width="1.6" fill="none"/><path d="M691.6 1230.1h13M698.1 1223.6v13M693.5 1225.5l9.2 9.2M693.5 1234.7l9.2 -9.2" stroke="#e04818" stroke-width="1.6" fill="none"/><path d="M715.3 1230.6h13M721.8 1224.1v13M717.2 1226.0l9.2 9.2M717.2 1235.2l9.2 -9.2" stroke="#e04818" stroke-width="1.6" fill="none"/><path d="M739.0 1230.8h13M745.5 1224.3v13M740.9 1226.2l9.2 9.2M740.9 1235.4l9.2 -9.2" stroke="#e04818" stroke-width="1.6" fill="none"/><path d="M762.7 1230.9h13M769.2 1224.4v13M764.6 1226.3l9.2 9.2M764.6 1235.5l9.2 -9.2" stroke="#e04818" stroke-width="1.6" fill="none"/><path d="M786.4 1231.0h13M792.9 1224.5v13M788.3 1226.4l9.2 9.2M788.3 1235.6l9.2 -9.2" stroke="#e04818" stroke-width="1.6" fill="none"/><path d="M810.1 1231.0h13M816.6 1224.5v13M812.0 1226.4l9.2 9.2M812.0 1235.6l9.2 -9.2" stroke="#e04818" stroke-width="1.6" fill="none"/><path d="M833.8 1231.0h13M840.2 1224.5v13M835.6 1226.4l9.2 9.2M835.6 1235.6l9.2 -9.2" stroke="#e04818" stroke-width="1.6" fill="none"/><path d="M857.4 1231.0h13M863.9 1224.5v13M859.3 1226.4l9.2 9.2M859.3 1235.6l9.2 -9.2" stroke="#e04818" stroke-width="1.6" fill="none"/><path d="M881.1 1231.0h13M887.6 1224.5v13M883.0 1226.4l9.2 9.2M883.0 1235.6l9.2 -9.2" stroke="#e04818" stroke-width="1.6" fill="none"/><path d="M904.8 1231.0h13M911.3 1224.5v13M906.7 1226.4l9.2 9.2M906.7 1235.6l9.2 -9.2" stroke="#e04818" stroke-width="1.6" fill="none"/><path d="M177.0 703.0 L200.7 703.0 L224.4 703.1 L248.1 703.7 L271.8 705.1 L295.4 708.0 L319.1 713.2 L342.8 721.7 L366.5 734.1 L390.2 751.0 L413.9 772.9 L437.6 799.4 L461.2 829.9 L484.9 863.3 L508.6 898.1 L532.3 933.1 L556.0 967.0 L579.7 998.9 L603.4 1028.1 L627.1 1054.3 L650.8 1077.6 L674.4 1097.9 L698.1 1115.6 L721.8 1130.8 L745.5 1143.9 L769.2 1155.1 L792.9 1164.8 L816.6 1173.0 L840.2 1180.1 L863.9 1186.2 L887.6 1191.5 L911.3 1196.0" fill="none" stroke="#d050ec" stroke-width="1.7"/><path d="M177.0 696.5L183.0 708.5L171.0 708.5Z" stroke="#d050ec" stroke-width="1.6" fill="none"/><path d="M200.7 696.5L206.7 708.5L194.7 708.5Z" stroke="#d050ec" stroke-width="1.6" fill="none"/><path d="M224.4 696.6L230.4 708.6L218.4 708.6Z" stroke="#d050ec" stroke-width="1.6" fill="none"/><path d="M248.1 697.2L254.1 709.2L242.1 709.2Z" stroke="#d050ec" stroke-width="1.6" fill="none"/><path d="M271.8 698.6L277.8 710.6L265.8 710.6Z" stroke="#d050ec" stroke-width="1.6" fill="none"/><path d="M295.4 701.5L301.4 713.5L289.4 713.5Z" stroke="#d050ec" stroke-width="1.6" fill="none"/><path d="M319.1 706.7L325.1 718.7L313.1 718.7Z" stroke="#d050ec" stroke-width="1.6" fill="none"/><path d="M342.8 715.2L348.8 727.2L336.8 727.2Z" stroke="#d050ec" stroke-width="1.6" fill="none"/><path d="M366.5 727.6L372.5 739.6L360.5 739.6Z" stroke="#d050ec" stroke-width="1.6" fill="none"/><path d="M390.2 744.5L396.2 756.5L384.2 756.5Z" stroke="#d050ec" stroke-width="1.6" fill="none"/><path d="M413.9 766.4L419.9 778.4L407.9 778.4Z" stroke="#d050ec" stroke-width="1.6" fill="none"/><path d="M437.6 792.9L443.6 804.9L431.6 804.9Z" stroke="#d050ec" stroke-width="1.6" fill="none"/><path d="M461.2 823.4L467.2 835.4L455.2 835.4Z" stroke="#d050ec" stroke-width="1.6" fill="none"/><path d="M484.9 856.8L490.9 868.8L478.9 868.8Z" stroke="#d050ec" stroke-width="1.6" fill="none"/><path d="M508.6 891.6L514.6 903.6L502.6 903.6Z" stroke="#d050ec" stroke-width="1.6" fill="none"/><path d="M532.3 926.6L538.3 938.6L526.3 938.6Z" stroke="#d050ec" stroke-width="1.6" fill="none"/><path d="M556.0 960.5L562.0 972.5L550.0 972.5Z" stroke="#d050ec" stroke-width="1.6" fill="none"/><path d="M579.7 992.4L585.7 1004.4L573.7 1004.4Z" stroke="#d050ec" stroke-width="1.6" fill="none"/><path d="M603.4 1021.6L609.4 1033.6L597.4 1033.6Z" stroke="#d050ec" stroke-width="1.6" fill="none"/><path d="M627.1 1047.8L633.1 1059.8L621.1 1059.8Z" stroke="#d050ec" stroke-width="1.6" fill="none"/><path d="M650.8 1071.1L656.8 1083.1L644.8 1083.1Z" stroke="#d050ec" stroke-width="1.6" fill="none"/><path d="M674.4 1091.4L680.4 1103.4L668.4 1103.4Z" stroke="#d050ec" stroke-width="1.6" fill="none"/><path d="M698.1 1109.1L704.1 1121.1L692.1 1121.1Z" stroke="#d050ec" stroke-width="1.6" fill="none"/><path d="M721.8 1124.3L727.8 1136.3L715.8 1136.3Z" stroke="#d050ec" stroke-width="1.6" fill="none"/><path d="M745.5 1137.4L751.5 1149.4L739.5 1149.4Z" stroke="#d050ec" stroke-width="1.6" fill="none"/><path d="M769.2 1148.6L775.2 1160.6L763.2 1160.6Z" stroke="#d050ec" stroke-width="1.6" fill="none"/><path d="M792.9 1158.3L798.9 1170.3L786.9 1170.3Z" stroke="#d050ec" stroke-width="1.6" fill="none"/><path d="M816.6 1166.5L822.6 1178.5L810.6 1178.5Z" stroke="#d050ec" stroke-width="1.6" fill="none"/><path d="M840.2 1173.6L846.2 1185.6L834.2 1185.6Z" stroke="#d050ec" stroke-width="1.6" fill="none"/><path d="M863.9 1179.7L869.9 1191.7L857.9 1191.7Z" stroke="#d050ec" stroke-width="1.6" fill="none"/><path d="M887.6 1185.0L893.6 1197.0L881.6 1197.0Z" stroke="#d050ec" stroke-width="1.6" fill="none"/><path d="M911.3 1189.5L917.3 1201.5L905.3 1201.5Z" stroke="#d050ec" stroke-width="1.6" fill="none"/><path d="M177.0 703.0 L200.7 703.0 L224.4 703.0 L248.1 703.0 L271.8 703.0 L295.4 703.0 L319.1 703.0 L342.8 704.0 L366.5 716.4 L390.2 816.9 L413.9 1069.2 L437.6 1198.4 L461.2 1225.0 L484.9 1229.8 L508.6 1230.7 L532.3 1230.9 L556.0 1231.0 L579.7 1231.0 L603.4 1231.0 L627.1 1231.0 L650.8 1231.0 L674.4 1231.0 L698.1 1231.0 L721.8 1231.0 L745.5 1231.0 L769.2 1231.0 L792.9 1231.0 L816.6 1231.0 L840.2 1231.0 L863.9 1231.0 L887.6 1231.0 L911.3 1231.0" fill="none" stroke="#2c7a2c" stroke-width="1.7"/><path d="M177.0 703.0 L200.7 703.1 L224.4 704.0 L248.1 708.0 L271.8 718.4 L295.4 739.2 L319.1 772.9 L342.8 819.4 L366.5 874.8 L390.2 933.1 L413.9 988.5 L437.6 1037.2 L461.2 1077.6 L484.9 1110.0 L508.6 1135.4 L532.3 1155.1 L556.0 1170.4 L579.7 1182.3 L603.4 1191.5 L627.1 1198.7 L650.8 1204.4 L674.4 1208.9 L698.1 1212.5 L721.8 1215.4 L745.5 1217.8 L769.2 1219.8 L792.9 1221.4 L816.6 1222.7 L840.2 1223.8 L863.9 1224.7 L887.6 1225.5 L911.3 1226.2" fill="none" stroke="#dc4020" stroke-width="1.7"/><rect x="171.5" y="697.5" width="11" height="11" stroke="#dc4020" stroke-width="1.6" fill="none"/><rect x="195.2" y="697.6" width="11" height="11" stroke="#dc4020" stroke-width="1.6" fill="none"/><rect x="218.9" y="698.5" width="11" height="11" stroke="#dc4020" stroke-width="1.6" fill="none"/><rect x="242.6" y="702.5" width="11" height="11" stroke="#dc4020" stroke-width="1.6" fill="none"/><rect x="266.2" y="712.9" width="11" height="11" stroke="#dc4020" stroke-width="1.6" fill="none"/><rect x="289.9" y="733.7" width="11" height="11" stroke="#dc4020" stroke-width="1.6" fill="none"/><rect x="313.6" y="767.4" width="11" height="11" stroke="#dc4020" stroke-width="1.6" fill="none"/><rect x="337.3" y="813.9" width="11" height="11" stroke="#dc4020" stroke-width="1.6" fill="none"/><rect x="361.0" y="869.3" width="11" height="11" stroke="#dc4020" stroke-width="1.6" fill="none"/><rect x="384.7" y="927.6" width="11" height="11" stroke="#dc4020" stroke-width="1.6" fill="none"/><rect x="408.4" y="983.0" width="11" height="11" stroke="#dc4020" stroke-width="1.6" fill="none"/><rect x="432.1" y="1031.7" width="11" height="11" stroke="#dc4020" stroke-width="1.6" fill="none"/><rect x="455.8" y="1072.1" width="11" height="11" stroke="#dc4020" stroke-width="1.6" fill="none"/><rect x="479.4" y="1104.5" width="11" height="11" stroke="#dc4020" stroke-width="1.6" fill="none"/><rect x="503.1" y="1129.9" width="11" height="11" stroke="#dc4020" stroke-width="1.6" fill="none"/><rect x="526.8" y="1149.6" width="11" height="11" stroke="#dc4020" stroke-width="1.6" fill="none"/><rect x="550.5" y="1164.9" width="11" height="11" stroke="#dc4020" stroke-width="1.6" fill="none"/><rect x="574.2" y="1176.8" width="11" height="11" stroke="#dc4020" stroke-width="1.6" fill="none"/><rect x="597.9" y="1186.0" width="11" height="11" stroke="#dc4020" stroke-width="1.6" fill="none"/><rect x="621.6" y="1193.2" width="11" height="11" stroke="#dc4020" stroke-width="1.6" fill="none"/><rect x="645.2" y="1198.9" width="11" height="11" stroke="#dc4020" stroke-width="1.6" fill="none"/><rect x="668.9" y="1203.4" width="11" height="11" stroke="#dc4020" stroke-width="1.6" fill="none"/><rect x="692.6" y="1207.0" width="11" height="11" stroke="#dc4020" stroke-width="1.6" fill="none"/><rect x="716.3" y="1209.9" width="11" height="11" stroke="#dc4020" stroke-width="1.6" fill="none"/><rect x="740.0" y="1212.3" width="11" height="11" stroke="#dc4020" stroke-width="1.6" fill="none"/><rect x="763.7" y="1214.3" width="11" height="11" stroke="#dc4020" stroke-width="1.6" fill="none"/><rect x="787.4" y="1215.9" width="11" height="11" stroke="#dc4020" stroke-width="1.6" fill="none"/><rect x="811.1" y="1217.2" width="11" height="11" stroke="#dc4020" stroke-width="1.6" fill="none"/><rect x="834.8" y="1218.3" width="11" height="11" stroke="#dc4020" stroke-width="1.6" fill="none"/><rect x="858.4" y="1219.2" width="11" height="11" stroke="#dc4020" stroke-width="1.6" fill="none"/><rect x="882.1" y="1220.0" width="11" height="11" stroke="#dc4020" stroke-width="1.6" fill="none"/><rect x="905.8" y="1220.7" width="11" height="11" stroke="#dc4020" stroke-width="1.6" fill="none"/></g><rect x="177.0" y="703.0" width="758.0" height="528.0" fill="none" stroke="#000" stroke-width="2"/><path d="M177.0 1231.0v-13M177.0 703.0v13M177.0 1231.0h13M935.0 1231.0h-13M214.9 1231.0v-7M214.9 703.0v7M177.0 1204.6h7M935.0 1204.6h-7M252.8 1231.0v-7M252.8 703.0v7M177.0 1178.2h7M935.0 1178.2h-7M290.7 1231.0v-7M290.7 703.0v7M177.0 1151.8h7M935.0 1151.8h-7M328.6 1231.0v-13M328.6 703.0v13M177.0 1125.4h13M935.0 1125.4h-13M366.5 1231.0v-7M366.5 703.0v7M177.0 1099.0h7M935.0 1099.0h-7M404.4 1231.0v-7M404.4 703.0v7M177.0 1072.6h7M935.0 1072.6h-7M442.3 1231.0v-7M442.3 703.0v7M177.0 1046.2h7M935.0 1046.2h-7M480.2 1231.0v-13M480.2 703.0v13M177.0 1019.8h13M935.0 1019.8h-13M518.1 1231.0v-7M518.1 703.0v7M177.0 993.4h7M935.0 993.4h-7M556.0 1231.0v-7M556.0 703.0v7M177.0 967.0h7M935.0 967.0h-7M593.9 1231.0v-7M593.9 703.0v7M177.0 940.6h7M935.0 940.6h-7M631.8 1231.0v-13M631.8 703.0v13M177.0 914.2h13M935.0 914.2h-13M669.7 1231.0v-7M669.7 703.0v7M177.0 887.8h7M935.0 887.8h-7M707.6 1231.0v-7M707.6 703.0v7M177.0 861.4h7M935.0 861.4h-7M745.5 1231.0v-7M745.5 703.0v7M177.0 835.0h7M935.0 835.0h-7M783.4 1231.0v-13M783.4 703.0v13M177.0 808.6h13M935.0 808.6h-13M821.3 1231.0v-7M821.3 703.0v7M177.0 782.2h7M935.0 782.2h-7M859.2 1231.0v-7M859.2 703.0v7M177.0 755.8h7M935.0 755.8h-7M897.1 1231.0v-7M897.1 703.0v7M177.0 729.4h7M935.0 729.4h-7M935.0 1231.0v-13M935.0 703.0v13M177.0 703.0h13M935.0 703.0h-13" stroke="#000" stroke-width="2" fill="none"/><text x="177.0" y="1264" class="ct" text-anchor="middle">0.0</text><text x="328.6" y="1264" class="ct" text-anchor="middle">0.2</text><text x="480.2" y="1264" class="ct" text-anchor="middle">0.4</text><text x="631.8" y="1264" class="ct" text-anchor="middle">0.6</text><text x="783.4" y="1264" class="ct" text-anchor="middle">0.8</text><text x="935.0" y="1264" class="ct" text-anchor="middle">1.0</text><text x="169" y="1231" class="ct" text-anchor="end">0.0</text><text x="169" y="1133" class="ct" text-anchor="end">0.2</text><text x="169" y="1028" class="ct" text-anchor="end">0.4</text><text x="169" y="922" class="ct" text-anchor="end">0.6</text><text x="169" y="817" class="ct" text-anchor="end">0.8</text><text x="169" y="718" class="ct" text-anchor="end">1.0</text><text x="555" y="690" class="ctt" text-anchor="middle">Filtro</text><text x="555" y="1293" class="ct" text-anchor="middle">Frequï¿½ncia [Ny]</text><text transform="translate(121,968) rotate(-90)" class="cy" text-anchor="middle">Peso [ua]</text></svg><svg class="abs" style="left:1818px;top:1406px" width="24" height="26"><rect width="24" height="26" fill="#fff"/><path d="M6 25 L23 8 M12 25 L23 14 M18 25 L23 20" stroke="#9a9a9a" stroke-width="1.5"/></svg></body></html>
